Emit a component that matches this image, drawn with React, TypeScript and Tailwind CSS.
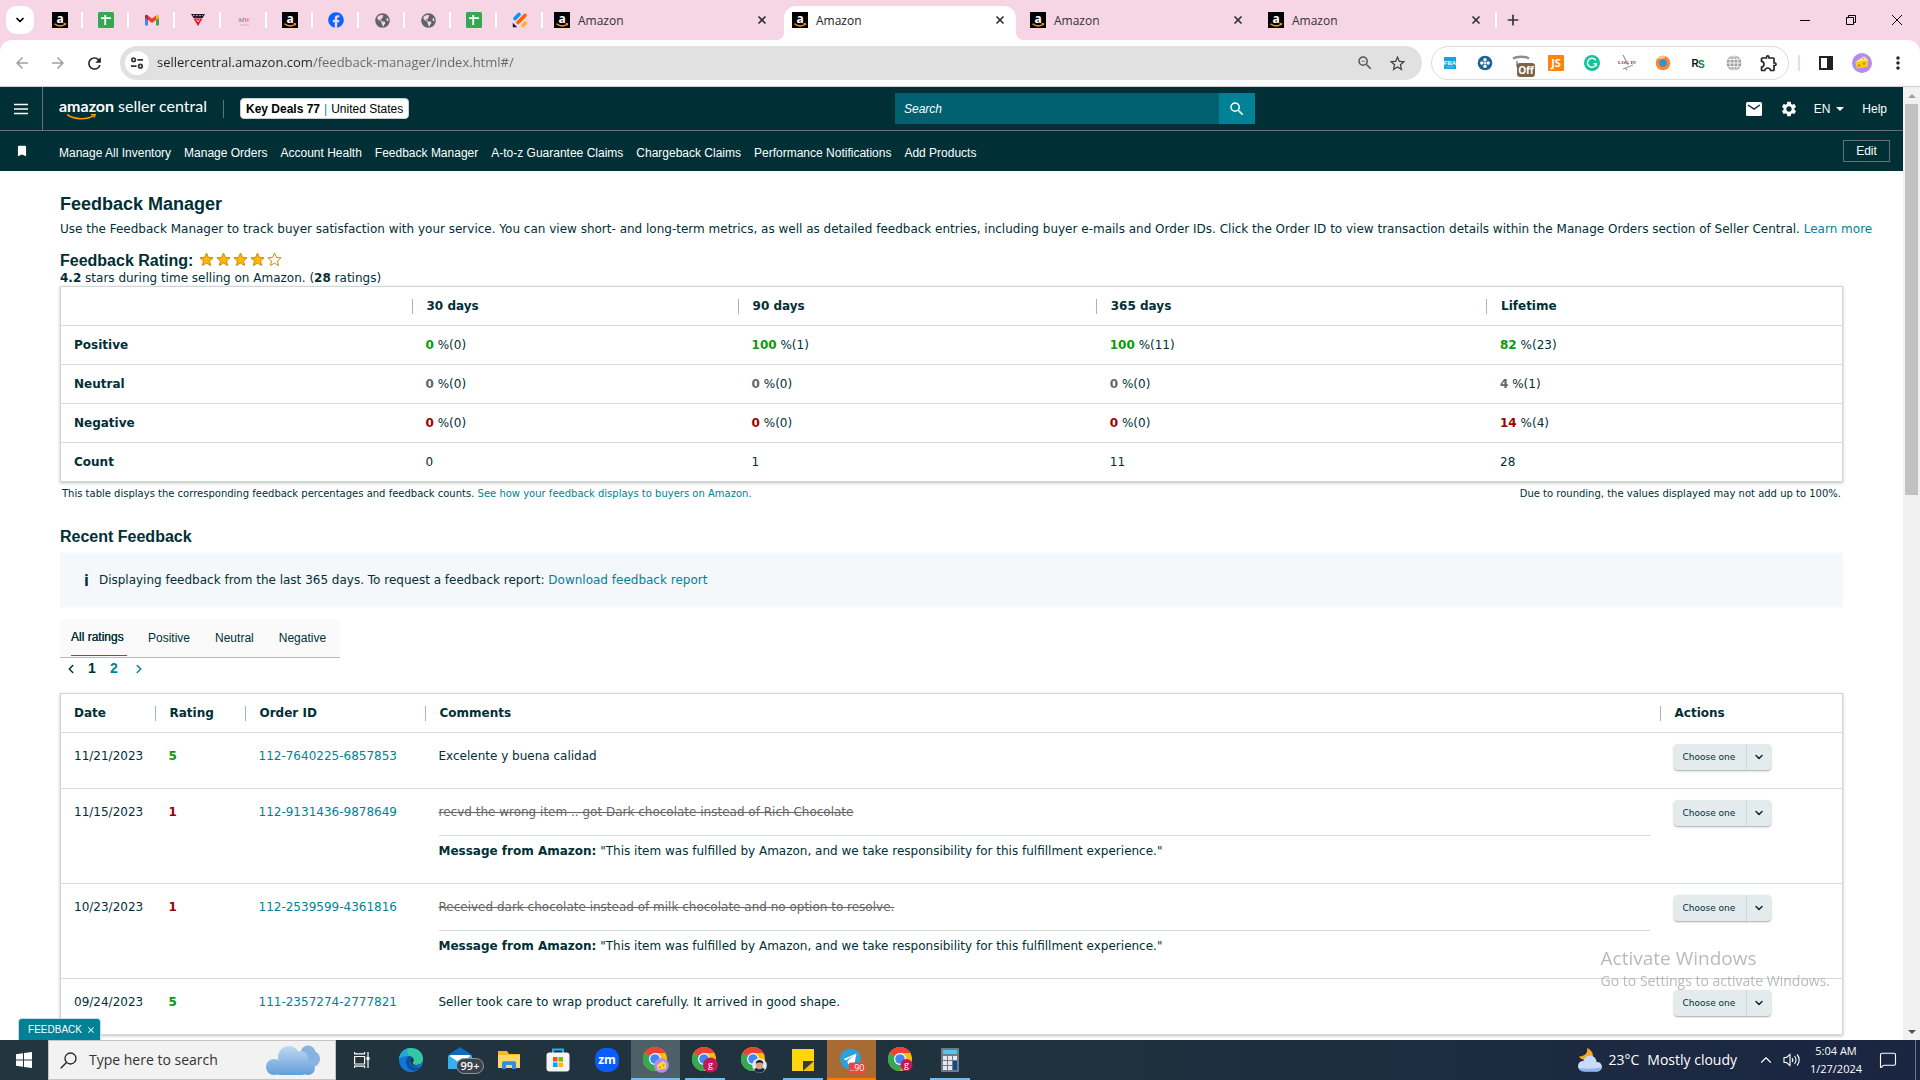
import React from 'react';
import { FaFacebook, FaGlobeAmericas } from 'react-icons/fa';
import {
  MdArrowBack,
  MdArrowForward,
  MdBookmark,
  MdClose,
  MdMoreVert,
  MdOutlineExtension,
  MdRefresh,
  MdSearch,
  MdSettings,
  MdStarBorder,
  MdZoomOut,
} from 'react-icons/md';
import { ChevronDown, ChevronLeft, ChevronRight, ChevronUp, MessageSquare, Plus, X } from 'lucide-react';

/* ---------- favicons ---------- */

function AmazonFavicon() {
  return (
    <svg className="size-4 shrink-0 overflow-visible" viewBox="0 0 16 16" aria-hidden="true">
      <rect width="16" height="16" fill="#000" />
      <text x="8" y="10.6" textAnchor="middle" fontSize="12" fontWeight="bold" fontFamily="Open Sans, sans-serif" fill="#fff">
        a
      </text>
      <path d="M2.500 11.800c3.200 2.600 7.500 2.600 10.600.5" fill="none" stroke="#f90" strokeWidth="1.300" />
      <path d="M11.600 11.600l2.200-.2-.6 2" fill="none" stroke="#f90" strokeWidth="1" />
    </svg>
  );
}

function SheetsFavicon() {
  return (
    <svg className="size-4" viewBox="0 0 16 16" aria-hidden="true">
      <rect width="16" height="16" rx="1.6" fill="#34a853" />
      <path d="M3 6.200h10M7.200 3v10" stroke="#fff" strokeWidth="1.800" />
    </svg>
  );
}

function GmailFavicon() {
  return (
    <svg className="size-4" viewBox="0 0 16 16" aria-hidden="true">
      <path d="M1 4v8.600c0 .5.4.9.9.9H4V7z" fill="#4285f4" />
      <path d="M15 4v8.600c0 .5-.4.9-.9.9H12V7z" fill="#34a853" />
      <path d="M4 3.400V8l4 3 4-3V3.400L8 6.500z" fill="#ea4335" />
      <path d="M1 4.200V5.800L4 8V3.400C2.600 2.200 1 2.900 1 4.200z" fill="#c5221f" />
      <path d="M15 4.200V5.800L12 8V3.400C13.400 2.200 15 2.900 15 4.200z" fill="#fbbc04" />
    </svg>
  );
}

function TriangleFavicon() {
  return (
    <svg className="size-4" viewBox="0 0 16 16" aria-hidden="true">
      <path d="M1 2h14l-2.400 4H3.500z" fill="#2b1a2e" />
      <path d="M3.500 6.500h9L8 14z" fill="#e01b22" />
      <path d="M3 3.500h10" stroke="#f0802a" strokeWidth="1.200" strokeDasharray="2 1" />
      <path d="M6.500 7.500L8 10l1.500-2.500" fill="none" stroke="#fff" strokeWidth=".8" />
    </svg>
  );
}

function ScriptFavicon() {
  return (
    <svg className="size-4 overflow-visible" viewBox="0 0 16 16" aria-hidden="true">
      <text x="8" y="10" textAnchor="middle" fontSize="7" fontStyle="italic" fontFamily="Liberation Serif, serif" fill="#6b6f9c">
        M<tspan fill="#e0606c">W</tspan>
      </text>
      <path d="M4 13h9" stroke="#d9a9b8" strokeWidth=".8" />
    </svg>
  );
}

function StripesFavicon() {
  return (
    <svg className="size-4" viewBox="0 0 16 16" aria-hidden="true" strokeLinecap="round" strokeWidth="3.600">
      <path d="M3 6.500L7 2.500" stroke="#0099ff" />
      <path d="M6 10.500L13 3.500" stroke="#ff6100" />
      <path d="M11 13.500L13.500 11" stroke="#ffb629" />
      <path d="M.8 10.800v4.400h4.400z" fill="#0a1551" stroke="none" />
    </svg>
  );
}

const Globe = () => <FaGlobeAmericas className="size-[15px] text-[#5f6368]" />;

const pinned: [string, React.ReactNode][] = [
  ['Amazon', <AmazonFavicon />],
  ['Sheets', <SheetsFavicon />],
  ['Gmail', <GmailFavicon />],
  ['Triangle', <TriangleFavicon />],
  ['Script', <ScriptFavicon />],
  ['Amazon orders', <AmazonFavicon />],
  ['Facebook', <FaFacebook className="size-4 text-[#0866ff]" />],
  ['Site one', <Globe />],
  ['Site two', <Globe />],
  ['Sheets two', <SheetsFavicon />],
  ['Forms', <StripesFavicon />],
];

function TabStrip() {
  return (
    <div className="flex h-10 items-center bg-[#f6d5e4] font-['Open_Sans',sans-serif] text-xs text-[#333]">
      <button aria-label="Search tabs" className="ml-[6px] mr-[3px] flex size-7 items-center justify-center rounded-[10px] bg-white">
        <ChevronDown className="size-3 text-black" strokeWidth={3.500} />
      </button>
      {pinned.map(([name, icon]) => (
        <button key={name} aria-label={name} className="flex h-4 w-[46px] items-center justify-center border-r-2 border-white pl-0.5">
          {icon}
        </button>
      ))}
      {[0, 1, 2, 3].map((i) => (
        <div
          key={i}
          className={
            i === 1
              ? 'relative mx-[3px] mt-[6px] flex h-[34px] w-[232px] items-center rounded-t-xl bg-white pb-[6px] pl-2 pr-[10px] text-[#222]'
              : 'flex h-7 w-[238px] items-center pl-[11px] pr-[13px]'
          }
        >
          {i === 1 && (
            <>
              <span className="absolute bottom-0 -left-2 size-2 bg-[radial-gradient(circle_at_0_0,#f6d5e4_8px,#fff_8px)]" />
              <span className="absolute bottom-0 -right-2 size-2 bg-[radial-gradient(circle_at_100%_0,#f6d5e4_8px,#fff_8px)]" />
            </>
          )}
          <AmazonFavicon />
          <span className="ml-2 flex-1 pt-0.5">Amazon</span>
          <button aria-label="Close tab">
            <X className="size-3 text-[#333]" strokeWidth={3.500} />
          </button>
        </div>
      ))}
      <span className="h-4 w-0.5 bg-white" />
      <button aria-label="New tab" className="ml-2">
        <Plus className="size-4 text-[#333]" strokeWidth={2.500} />
      </button>
      <div className="ml-auto flex text-black">
        <button aria-label="Minimize" className="flex h-10 w-[46px] items-center justify-center">
          <svg className="size-2.5" viewBox="0 0 10 10">
            <path d="M0 5.500h10" stroke="currentColor" />
          </svg>
        </button>
        <button aria-label="Restore" className="flex h-10 w-[46px] items-center justify-center">
          <svg className="size-2.5" viewBox="0 0 10 10" fill="none" stroke="currentColor">
            <path d="M.5 2.500h7v7h-7zM2.500 2.500v-2h7v7h-2" />
          </svg>
        </button>
        <button aria-label="Close window" className="flex h-10 w-[46px] items-center justify-center">
          <svg className="size-2.5" viewBox="0 0 10 10" stroke="currentColor">
            <path d="M0 0l10 10M10 0L0 10" />
          </svg>
        </button>
      </div>
    </div>
  );
}

/* ---------- toolbar ---------- */

function CheeseAvatar({ className }: { className: string }) {
  return (
    <svg className={className} viewBox="0 0 20 20" aria-hidden="true">
      <circle cx="10" cy="10" r="10" fill="#b18cf5" />
      <path d="M3.500 9l8.500-5.500 4 3.500-.3 6.500L5 15.500z" fill="#fdd835" />
      <path d="M3.500 9L16 7l-.3 6.500L5 15.500z" fill="#f9c916" />
      <path d="M3.500 9L12 3.500 16 7z" fill="#fff07a" />
      <circle cx="7" cy="12.500" r="1.300" fill="#d98a0a" />
      <circle cx="12" cy="10.500" r="1.300" fill="#d98a0a" />
      <circle cx="11.500" cy="5.800" r=".9" fill="#e5a913" />
    </svg>
  );
}

const extensions: [string, React.ReactNode][] = [
  [
    'FBA',
    <svg className="size-4" viewBox="0 0 16 16">
      <rect x="2" y="2" width="12" height="12" fill="#12a5e0" />
      <text x="8" y="9.500" textAnchor="middle" fontSize="6" fontWeight="bold" fontFamily="Liberation Sans, sans-serif" fill="#fff">
        FBA
      </text>
      <path d="M4 11.800h8" stroke="#7fd0f0" strokeWidth=".7" />
    </svg>,
  ],
  [
    'Helper',
    <svg className="size-4" viewBox="0 0 16 16">
      <circle cx="8" cy="8" r="7.300" fill="#1f6391" />
      <g fill="#fff">
        <circle cx="8" cy="4.800" r="1.700" />
        <circle cx="8" cy="11.200" r="1.700" />
        <circle cx="4.800" cy="8" r="1.700" />
        <circle cx="11.200" cy="8" r="1.700" />
        <rect x="6.800" y="6.800" width="2.400" height="2.400" fill="#dbe8f1" />
      </g>
    </svg>,
  ],
  [
    'Blocker',
    <svg className="size-7" viewBox="0 0 28 28">
      <path d="M6 9.500c4-2.500 12-2.500 16 0" stroke="#8d8d8d" strokeWidth="2.500" fill="none" />
      <path d="M10 12v6" stroke="#a5a5a5" strokeWidth="2" fill="none" />
      <rect x="10" y="14" width="18" height="14" rx="3" fill="#7e6346" />
      <text x="19" y="24.500" textAnchor="middle" fontSize="10" fontWeight="bold" fontFamily="Open Sans, sans-serif" fill="#fff">
        Off
      </text>
    </svg>,
  ],
  [
    'JS',
    <svg className="size-4" viewBox="0 0 16 16">
      <rect width="16" height="16" rx="1" fill="#ff8308" />
      <text x="8" y="12" textAnchor="middle" fontSize="11" fontWeight="bold" fontFamily="Open Sans, sans-serif" fill="#fff">
        JS
      </text>
    </svg>,
  ],
  [
    'Grammar',
    <svg className="size-4" viewBox="0 0 16 16">
      <circle cx="8" cy="8" r="8" fill="#15c39a" />
      <path d="M11.800 5.500A4.500 4.500 0 1 0 12.300 8.800H9.500M12.300 8.800v2.500" fill="none" stroke="#fff" strokeWidth="1.400" />
    </svg>,
  ],
  [
    'Log in',
    <svg className="size-4 overflow-visible" viewBox="0 0 16 16">
      <path d="M4 0l5 10M4 14l10-4M8 15l-2-2" stroke="#9a9a9a" strokeWidth="1.200" fill="none" />
      <text x="8" y="8.500" textAnchor="middle" fontSize="5" fontWeight="bold" fontFamily="Liberation Serif, serif" fill="#8c2f2f">
        LOG IN
      </text>
    </svg>,
  ],
  [
    'Flame',
    <svg className="size-4" viewBox="0 0 16 16">
      <circle cx="8" cy="8" r="7.300" fill="#f28a45" />
      <path d="M2 4a7.300 7.300 0 0 1 9-2.600L8 4z" fill="#fbc08a" />
      <circle cx="8" cy="8" r="4.200" fill="#e36a2a" />
      <circle cx="8" cy="8" r="3.200" fill="#1b9be6" />
    </svg>,
  ],
  [
    'RS',
    <svg className="size-4 overflow-visible" viewBox="0 0 16 16" fontFamily="Liberation Sans, sans-serif" fontWeight="bold">
      <text x="1.500" y="11.500" fontSize="10" fill="#111">R<tspan y="13" x="8" fill="#14823c">S</tspan></text>
    </svg>,
  ],
  [
    'Web',
    <svg className="size-4" viewBox="0 0 16 16" fill="none" stroke="#fff" strokeWidth=".9">
      <circle cx="8" cy="8" r="7.500" fill="#a0a0a0" stroke="none" />
      <path d="M8 0v16M0 8h16M1.500 4.300h13M1.500 11.700h13" />
      <ellipse cx="8" cy="8" rx="4" ry="7.500" />
    </svg>,
  ],
  ['Extensions', <MdOutlineExtension className="size-5 text-[#222]" />],
];

function Toolbar() {
  return (
    <div className="bg-[#f6d5e4]">
      <div className="flex h-[47px] items-center rounded-t-xl border-b border-[#cfcfcf] bg-white pl-1 pr-1">
        <button aria-label="Back" className="flex w-9 justify-center"><MdArrowBack className="size-[18px] text-[#a0a0a0]" /></button>
        <button aria-label="Forward" className="flex w-9 justify-center"><MdArrowForward className="size-[18px] text-[#a0a0a0]" /></button>
        <button aria-label="Reload" className="flex w-9 justify-center"><MdRefresh className="size-[19px] text-[#222]" /></button>
        <div className="ml-2 flex h-[34px] flex-1 items-center rounded-full bg-[#e1e1e1] pl-[5px] pr-2">
          <button aria-label="Site information" className="flex size-6 items-center justify-center rounded-full bg-white">
            <svg className="size-3.5" viewBox="0 0 14 14" fill="none" stroke="#333" strokeWidth="1.700">
              <circle cx="3.600" cy="3.800" r="1.800" />
              <circle cx="10.400" cy="10.200" r="1.800" />
              <path d="M7.500 3.800h5.500M1 10.200h5.500" />
            </svg>
          </button>
          <input
            aria-label="Address"
            defaultValue="sellercentral.amazon.com/feedback-manager/index.html#/"
            className="ml-2 min-w-0 flex-1 bg-[linear-gradient(90deg,#222_156px,#666_156px)] bg-clip-text font-['Open_Sans',sans-serif] text-[13px] text-transparent outline-none"
          />
          <button aria-label="Zoom" className="flex w-[33px] justify-center"><MdZoomOut className="size-[18px] text-[#555]" /></button>
          <button aria-label="Bookmark page" className="flex w-[33px] justify-center"><MdStarBorder className="size-[19px] text-[#444]" /></button>
        </div>
        <div className="ml-[9px] flex h-[34px] w-[358px] items-center rounded-full border border-[#dcdcdc] bg-white pr-px">
          {extensions.map(([name, icon]) => (
            <button key={name} aria-label={name} className="flex w-9 items-center justify-center">
              {icon}
            </button>
          ))}
        </div>
        <span className="ml-[9px] h-4 w-0.5 bg-[#f6d5e4]" />
        <button aria-label="Side panel" className="ml-2 flex w-9 justify-center">
          <svg className="size-3.5" viewBox="0 0 14 14">
            <path d="M1 1h12v12H1z" fill="none" stroke="#222" strokeWidth="2" />
            <path d="M8 1h5v12H8z" fill="#222" />
          </svg>
        </button>
        <button aria-label="Profile" className="flex w-9 justify-center"><CheeseAvatar className="size-5" /></button>
        <button aria-label="Menu" className="flex w-9 justify-center"><MdMoreVert className="size-5 text-[#222]" /></button>
      </div>
    </div>
  );
}

/* ---------- seller central header ---------- */

const navLinks = [
  'Manage All Inventory',
  'Manage Orders',
  'Account Health',
  'Feedback Manager',
  'A-to-z Guarantee Claims',
  'Chargeback Claims',
  'Performance Notifications',
  'Add Products',
];

function Header() {
  return (
    <header className="bg-[#002f36] text-xs text-white">
      <div className="grid grid-cols-[895fr_360px_648fr] items-center border-b border-[#5f7376]">
        <div className="flex h-[43px] items-center">
          <button aria-label="Open menu" className="flex w-[43px] items-center justify-center self-stretch border-r border-[#5f7376]">
            <svg className="h-3 w-3.5" viewBox="0 0 14 12">
              <path d="M0 1.500h14M0 6h14M0 10.500h14" stroke="#fff" strokeWidth="1.600" />
            </svg>
          </button>
          <a href="#home" className="ml-4 flex flex-col font-['Lato',sans-serif] leading-[16px]" aria-label="amazon seller central">
            <span className="flex gap-1 text-base leading-4">
              <span className="font-bold">amazon</span>
              <span>seller central</span>
            </span>
            <svg className="ml-2 h-1.5 w-[30px]" viewBox="0 0 30 6" fill="none" stroke="#f90">
              <path d="M0 .5c8 5.500 20 5.500 27 .8" strokeWidth="1.600" />
              <path d="M24 .6l4.500-.2-1.500 3.400" strokeWidth="1.200" />
            </svg>
          </a>
          <span className="ml-4 h-[18px] w-px bg-[#5f7376]" />
          <button className="ml-4 flex h-[21px] items-center gap-1 rounded-sm border border-[#c9d0d1] bg-white px-[5px] text-xs text-black">
            <span className="font-bold">Key Deals 77</span>
            <span className="text-[#0a84c8]">|</span>
            <span>United States</span>
          </button>
        </div>
        <form className="flex h-[31px]">
          <input aria-label="Search" placeholder="Search" className="min-w-0 flex-1 bg-[#00606f] px-[9px] italic text-white outline-none placeholder:text-white" />
          <button type="button" aria-label="Submit search" className="flex w-9 items-center justify-center bg-[#008296]">
            <MdSearch className="size-[18px]" />
          </button>
        </form>
        <div className="flex items-center justify-end pr-4">
          <button aria-label="Messages">
            <svg className="h-3.5 w-4" viewBox="0 0 16 14">
              <rect width="16" height="14" rx="1.500" fill="#fff" />
              <path d="M2 3l6 4 6-4" fill="none" stroke="#002f36" strokeWidth="1.500" />
            </svg>
          </button>
          <button aria-label="Settings" className="ml-[18px]"><MdSettings className="size-[18px]" /></button>
          <button className="ml-4 flex items-center gap-1.5">
            EN
            <svg className="h-1 w-2" viewBox="0 0 8 4"><path d="M0 0h8L4 4z" fill="#fff" /></svg>
          </button>
          <a href="#help" className="ml-[18px]">Help</a>
        </div>
      </div>
      <nav className="flex h-10 items-center pr-[13px]">
        <button aria-label="Bookmarks" className="flex w-[43px] justify-center"><MdBookmark className="size-3.5" /></button>
        <div className="ml-4 flex flex-1 gap-[13px] pt-1">
          {navLinks.map((l) => (
            <a key={l} href="#nav">{l}</a>
          ))}
        </div>
        <button className="h-[22px] w-[47px] border border-[#5f7376]">Edit</button>
      </nav>
    </header>
  );
}

/* ---------- page content ---------- */

function Star({ filled }: { filled: boolean }) {
  return (
    <svg className="size-[15px]" viewBox="0 0 15 15">
      <path
        d="M7.500 1l1.900 4.400 4.700.4-3.600 3.100 1.100 4.600-4.100-2.400-4.100 2.400 1.100-4.600L.9 5.800l4.700-.4z"
        fill={filled ? '#ffb800' : '#fff'}
        stroke="#c98a12"
        strokeWidth="1"
      />
    </svg>
  );
}

const summary = [
  { label: 'Positive', color: 'text-[#0a9b0a]', cells: [['0', '0'], ['100', '1'], ['100', '11'], ['82', '23']] },
  { label: 'Neutral', color: 'text-[#666]', cells: [['0', '0'], ['0', '0'], ['0', '0'], ['4', '1']] },
  { label: 'Negative', color: 'text-[#a00000]', cells: [['0', '0'], ['0', '0'], ['0', '0'], ['14', '4']] },
];

function HeadCell({ children }: { children: React.ReactNode }) {
  return (
    <th scope="col" className="p-0 text-left align-middle font-bold">
      <div className="flex">
        <span className="h-[15px] w-px bg-[#a6b5b8]" />
        <span className="-my-px ml-3.5">{children}</span>
      </div>
    </th>
  );
}

function SummaryTable() {
  return (
    <table className="w-full table-fixed border border-[#d0d6d8] shadow-[0_1px_3px_rgba(0,0,0,0.25)]">
      <colgroup>
        <col className="w-[351px]" />
        <col className="w-[18.3%]" />
        <col className="w-[20.1%]" />
        <col className="w-[21.9%]" />
        <col />
      </colgroup>
      <thead>
        <tr className="h-[39px] border-b border-[#d5dbdb]">
          <td />
          <HeadCell>30 days</HeadCell>
          <HeadCell>90 days</HeadCell>
          <HeadCell>365 days</HeadCell>
          <HeadCell>Lifetime</HeadCell>
        </tr>
      </thead>
      <tbody>
        {summary.map((r) => (
          <tr key={r.label} className="h-[39px] border-b border-[#d5dbdb]">
            <th scope="row" className="pl-[13px] text-left font-bold">{r.label}</th>
            {r.cells.map(([pct, n], i) => (
              <td key={i} className="pl-3.5">
                <b className={r.color}>{pct}</b> %({n})
              </td>
            ))}
          </tr>
        ))}
        <tr className="h-[39px]">
          <th scope="row" className="pl-[13px] text-left font-bold">Count</th>
          {['0', '1', '11', '28'].map((n) => (
            <td key={n} className="pl-3.5">{n}</td>
          ))}
        </tr>
      </tbody>
    </table>
  );
}

const entries = [
  { date: '11/21/2023', rating: 5, id: '112-7640225-6857853', text: 'Excelente y buena calidad', struck: false },
  { date: '11/15/2023', rating: 1, id: '112-9131436-9878649', text: 'recvd the wrong item .. got Dark chocolate instead of Rich Chocolate', struck: true },
  { date: '10/23/2023', rating: 1, id: '112-2539599-4361816', text: 'Received dark chocolate instead of milk chocolate and no option to resolve.', struck: true },
  { date: '09/24/2023', rating: 5, id: '111-2357274-2777821', text: 'Seller took care to wrap product carefully. It arrived in good shape.', struck: false },
];

function ActionSelect({ id }: { id: string }) {
  return (
    <div className="grid h-[26px] w-[97px] grid-cols-[72px_25px] rounded-sm bg-[#e3ebec] shadow-[0_1px_2px_rgba(0,0,0,0.35)]">
      <select
        aria-label={`Action for order ${id}`}
        className="col-span-2 col-start-1 row-start-1 appearance-none bg-transparent pl-[9px] text-[9px] text-[#002f36] outline-none"
      >
        <option>Choose one</option>
      </select>
      <span className="pointer-events-none col-start-2 row-start-1 flex items-center justify-center border-l border-[#cdd8d9]">
        <ChevronDown className="size-3" strokeWidth={3} />
      </span>
    </div>
  );
}

function FeedbackTable() {
  return (
    <table className="w-full table-fixed border border-[#d0d6d8] shadow-[0_1px_3px_rgba(0,0,0,0.25)]">
      <colgroup>
        <col className="w-[94px]" />
        <col className="w-[90px]" />
        <col className="w-[180px]" />
        <col />
        <col className="w-[183px]" />
      </colgroup>
      <thead>
        <tr className="h-[39px] border-b border-[#d5dbdb]">
          <th scope="col" className="pl-[13px] text-left font-bold">Date</th>
          <HeadCell>Rating</HeadCell>
          <HeadCell>Order ID</HeadCell>
          <HeadCell>Comments</HeadCell>
          <HeadCell>Actions</HeadCell>
        </tr>
      </thead>
      <tbody>
        {entries.map((e) => (
          <tr key={e.id} className="border-b border-[#d5dbdb] align-top">
            <td className="pl-[13px] pt-[15px]">{e.date}</td>
            <td className={e.rating === 5 ? 'pl-3.5 pt-[15px] font-bold text-[#0a9b0a]' : 'pl-3.5 pt-[15px] font-bold text-[#a00000]'}>
              {e.rating}
            </td>
            <td className="pl-3.5 pt-[15px]"><a href="#order" className="text-[#008296]">{e.id}</a></td>
            <td className="pl-3.5 pr-2.5 pt-[15px]">
              {e.struck ? (
                <>
                  <p className="border-b border-[#d5dbdb] pb-[15px] text-[#666] line-through">{e.text}</p>
                  <p className="pb-6 pt-[7px]">
                    <b>Message from Amazon:</b> "This item was fulfilled by Amazon, and we take responsibility for this fulfillment experience."
                  </p>
                </>
              ) : (
                <p className="pb-6">{e.text}</p>
              )}
            </td>
            <td className="pl-3.5 pt-[11px]"><ActionSelect id={e.id} /></td>
          </tr>
        ))}
      </tbody>
    </table>
  );
}

function Content() {
  return (
    <main className="pl-[60px] pr-[60px] pt-[21px] font-['DejaVu_Sans',sans-serif] text-xs leading-4 text-[#002f36]">
      <h1 className="font-['Liberation_Sans',sans-serif] text-lg font-bold leading-6">Feedback Manager</h1>
      <p className="mt-[5px] whitespace-nowrap">
        Use the Feedback Manager to track buyer satisfaction with your service. You can view short- and long-term metrics, as well as detailed feedback
        entries, including buyer e-mails and Order IDs. Click the Order ID to view transaction details within the Manage Orders section of Seller Central.{' '}
        <a href="#more" className="text-[#008296]">Learn more</a>
      </p>
      <div className="mt-[15px] flex h-[18px] items-center">
        <h2 className="font-['Liberation_Sans',sans-serif] text-base font-bold leading-[18px]">Feedback Rating:</h2>
        <div role="img" aria-label="4 of 5 stars" className="ml-1.5 flex gap-0.5 pb-1">
          {[1, 2, 3, 4, 5].map((n) => (
            <Star key={n} filled={n < 5} />
          ))}
        </div>
      </div>
      <p>
        <b>4.2</b> stars during time selling on Amazon. (<b>28</b> ratings)
      </p>
      <SummaryTable />
      <div className="mt-1 flex justify-between px-0.5 text-[10px]">
        <p>
          This table displays the corresponding feedback percentages and feedback counts.{' '}
          <a href="#display" className="text-[#008296]">See how your feedback displays to buyers on Amazon.</a>
        </p>
        <p>Due to rounding, the values displayed may not add up to 100%.</p>
      </div>
      <h2 className="mt-[23px] font-['Liberation_Sans',sans-serif] text-base font-bold leading-6">Recent Feedback</h2>
      <div className="mt-1 flex h-[54px] items-center bg-[#f4f8fa] pl-6">
        <span className="mr-2.5 font-['Open_Sans',sans-serif] text-base font-bold">i</span>
        <p>
          Displaying feedback from the last 365 days. To request a feedback report:{' '}
          <a href="#report" className="text-[#008296]">Download feedback report</a>
        </p>
      </div>
      <div role="tablist" className="mt-3 flex h-[39px] w-fit border-b border-[#b5bcbd] bg-[#fafafa] pl-[11px] pr-3.5 font-['Liberation_Sans',sans-serif]">
        <button role="tab" aria-selected="true" className="mb-px mr-[21px] w-14 border-b border-[#008296] text-left text-[#002f36] [text-shadow:0_0_0_#002f36]">All ratings</button>
        <button role="tab" className="mr-[25px]">Positive</button>
        <button role="tab" className="mr-[25px]">Neutral</button>
        <button role="tab">Negative</button>
      </div>
      <nav aria-label="Pages" className="mb-[15px] flex h-5 items-center pl-1 font-['Liberation_Sans',sans-serif] text-sm font-bold">
        <button aria-label="Previous page" className="pt-0.5"><ChevronLeft className="size-3.5" strokeWidth={2.500} /></button>
        <button className="ml-2.5 w-[22px] text-left">1</button>
        <button className="w-[22px] text-left text-[#008296]">2</button>
        <button aria-label="Next page" className="pt-0.5 text-[#008296]"><ChevronRight className="size-3.5" strokeWidth={2.500} /></button>
      </nav>
      <FeedbackTable />
    </main>
  );
}

function Scrollbar() {
  return (
    <div className="flex w-[17px] shrink-0 flex-col items-center bg-[#f1f1f1]" aria-hidden="true">
      <svg className="h-[17px] w-2" viewBox="0 0 8 17"><path d="M0 11h8L4 7z" fill="#a3a3a3" /></svg>
      <div className="h-[41%] w-[13px] bg-[#c1c1c1]" />
      <svg className="mt-auto h-[17px] w-2" viewBox="0 0 8 17"><path d="M0 7h8l-4 4z" fill="#505050" /></svg>
    </div>
  );
}

/* ---------- taskbar ---------- */

function ChromeIcon({ badge }: { badge: React.ReactNode }) {
  return (
    <svg className="size-[26px]" viewBox="0 0 26 26" aria-hidden="true">
      <g transform="translate(12 12)">
        <circle r="12" fill="#fbbc04" />
        <path d="M-10.400-6A12 12 0 0 0 0 12L5.200 3 0 0z" fill="#34a853" />
        <path d="M-10.400-6A12 12 0 0 1 10.400-6H0l-5.200 3z" fill="#ea4335" />
        <circle r="6" fill="#fff" />
        <circle r="4.800" fill="#4285f4" />
      </g>
      {badge}
    </svg>
  );
}

function GBadge({ r }: { r: number }) {
  return (
    <g>
      <circle cx="18.500" cy="18" r={r} fill="#c2185b" />
      <text x="18.500" y="20.500" textAnchor="middle" fontSize="9" fontFamily="Open Sans, sans-serif" fill="#fff">g</text>
    </g>
  );
}

const apps: { name: string; state?: 'active' | 'open' | 'alert'; icon: React.ReactNode }[] = [
  {
    name: 'Task view',
    icon: (
      <svg className="size-4" viewBox="0 0 16 16" fill="none" stroke="#fff" strokeWidth="1.200">
        <path d="M.6 4.500h10v7.500H.6zM.6 0v1.800h10V0M.6 16v-1.800h10V16M14 0v16" />
        <path d="M12.500 5h3v3h-3z" fill="#fff" stroke="none" />
      </svg>
    ),
  },
  {
    name: 'Edge',
    icon: (
      <svg className="size-6" viewBox="0 0 24 24">
        <circle cx="12" cy="12" r="12" fill="#1277d4" />
        <path d="M0 11C1 3 7 0 12 0c7 0 12 5 12 10.500 0 4-3 6.500-6.500 6.500-3 0-4.500-1.500-3.500-3 1-1.300 1-5.500-4-6C5 7.500 1 9.500 0 11z" fill="#36c6a4" />
        <path d="M0 11C1 4.500 5.500.5 10 .2 6 2.500 9 6 10 8 5 7.500 1 9.500 0 11z" fill="#1fa5d8" />
        <path d="M10 8c-4 2.500-4 10 1 13.500 4 2 9 .5 11.500-3-3 1.500-8 1.500-11-2C10 14 10.500 10 13 9z" fill="#0c4fa0" />
        <path d="M13 9c2 1.500 2 4 1 5-1 1.500.5 3 3.500 3 2 0 4-1 5-2.300-1.500 3.500-7 4-10 1.500C10.500 14 11 10.500 13 9z" fill="#21353f" />
      </svg>
    ),
  },
  {
    name: 'Mail',
    icon: (
      <svg className="-mr-3 h-7 w-9" viewBox="0 0 36 28">
        <path d="M0 9L12 1l12 8v14H0z" fill="#0f6cbd" />
        <path d="M2 9h20v6l-10 3L2 15z" fill="#fff" />
        <path d="M0 9l12 8 12-8v14H0z" fill="#35b1f1" />
        <rect x="8.500" y="12.500" width="27" height="15" rx="7.500" fill="#3b444c" stroke="#8b949a" />
        <text x="22" y="24" textAnchor="middle" fontSize="11" fontWeight="600" fontFamily="Open Sans, sans-serif" fill="#fff">99+</text>
      </svg>
    ),
  },
  {
    name: 'Explorer',
    icon: (
      <svg className="h-5 w-[22px]" viewBox="0 0 22 20">
        <path d="M0 1h9l2 3h11v14H0z" fill="#f5b91c" />
        <path d="M0 5h22v13H0z" fill="#ffd767" />
        <path d="M4 19v-6c0-1 .7-1.800 1.700-1.800h10.600c1 0 1.700.8 1.700 1.800v6h-4v-4H8v4z" fill="#2d8fe0" />
      </svg>
    ),
  },
  {
    name: 'Store',
    icon: (
      <svg className="h-6 w-6" viewBox="0 0 24 24">
        <path d="M7 5V1.500h10V5" fill="none" stroke="#2bb0ea" strokeWidth="2" />
        <rect x=".5" y="4.500" width="23" height="19" rx="3" fill="#f4f4f4" />
        <path d="M7 9h4.500v4.500H7z" fill="#f25022" />
        <path d="M12.500 9H17v4.500h-4.500z" fill="#7fba00" />
        <path d="M7 14.500h4.500V19H7z" fill="#00a4ef" />
        <path d="M12.500 14.500H17V19h-4.500z" fill="#ffb900" />
      </svg>
    ),
  },
  {
    name: 'Zoom',
    icon: (
      <svg className="size-6" viewBox="0 0 24 24">
        <rect width="24" height="24" rx="10" fill="#0b5cff" />
        <text x="12" y="15.500" textAnchor="middle" fontSize="12" fontWeight="bold" fontFamily="Open Sans, sans-serif" fill="#fff">zm</text>
      </svg>
    ),
  },
  {
    name: 'Chrome',
    state: 'active',
    icon: (
      <ChromeIcon
        badge={
          <g>
            <circle cx="18.500" cy="18.500" r="7.300" fill="#b18cf5" />
            <path d="M14 18l6-4 3 2.500v5L15 23z" fill="#fdd835" />
            <circle cx="17" cy="20.500" r="1" fill="#d98a0a" />
            <circle cx="20.500" cy="18.500" r="1" fill="#d98a0a" />
          </g>
        }
      />
    ),
  },
  { name: 'Chrome profile g', state: 'open', icon: <ChromeIcon badge={<GBadge r={7.5} />} /> },
  {
    name: 'Chrome profile photo',
    icon: (
      <ChromeIcon
        badge={
          <g>
            <circle cx="18.500" cy="18.500" r="7.300" fill="#dfe8ee" />
            <path d="M13 23c1-2 3-2.500 5.500-2.500S23 21 24 23c-3 3.500-8 3.500-11 0z" fill="#1d2a44" />
            <ellipse cx="18.500" cy="18" rx="3.600" ry="4.200" fill="#d8a183" />
            <path d="M14.800 17c-.5-5.500 7.900-5.500 7.400 0-1-2-6.400-2-7.400 0z" fill="#20191a" />
          </g>
        }
      />
    ),
  },
  {
    name: 'Sticky notes',
    state: 'open',
    icon: (
      <svg className="size-[22px]" viewBox="0 0 22 22">
        <path d="M0 0h22v12L11 22H0z" fill="#ffd60a" />
        <path d="M11 12h11L11 22z" fill="#3a3a3a" />
        <path d="M11 22L22 12v10z" fill="#f1c40f" />
      </svg>
    ),
  },
  {
    name: 'Telegram',
    state: 'alert',
    icon: (
      <svg className="size-[26px]" viewBox="0 0 26 26">
        <circle cx="11.500" cy="12" r="10.500" fill="#2aa1dd" />
        <path d="M4.500 12l13-5.500-2.500 12-4-3-2 2-.5-3.500 6-5.500-7.500 4.800z" fill="#fff" />
        <rect x="10" y="15.500" width="16" height="10.500" rx="2" fill="#f5403c" />
        <text x="18" y="24" textAnchor="middle" fontSize="9" fontFamily="Open Sans, sans-serif" fill="#fff">..90</text>
      </svg>
    ),
  },
  { name: 'Chrome second', icon: <ChromeIcon badge={<GBadge r={6} />} /> },
  {
    name: 'Calculator',
    state: 'open',
    icon: (
      <svg className="h-6 w-[18px]" viewBox="0 0 18 24">
        <rect width="18" height="24" rx="1" fill="#6f7c87" />
        <rect x="2" y="2" width="14" height="4" fill="#4cc9f0" />
        <g fill="#e6eaed">
          <path d="M2 8h4v4H2zM7 8h4v4H7zM12 8h4v4h-4zM2 13h4v4H2zM7 13h4v4H7zM2 18h4v4H2zM7 18h4v4H7z" />
        </g>
        <path d="M12 13h4v9h-4z" fill="#114a8b" />
      </svg>
    ),
  },
];

const appClass = {
  idle: 'flex h-10 w-[49px] items-center justify-center',
  open: 'flex h-10 w-[49px] items-center justify-center bg-[linear-gradient(#76b9ed,#76b9ed)] bg-[length:40px_2px] bg-bottom bg-no-repeat',
  active: 'flex h-10 w-[49px] items-center justify-center border-b-2 border-[#76b9ed] bg-[#4d5f67] pt-0.5',
  alert: 'flex h-10 w-[49px] items-center justify-center border-b-2 border-[#ff7800] bg-[#a86b33] pt-0.5',
};

function CloudArt() {
  return (
    <svg className="h-8 w-14" viewBox="0 0 56 32" aria-hidden="true">
      <defs>
        <linearGradient id="cloud" gradientUnits="userSpaceOnUse" x1="0" y1="0" x2="0" y2="32">
          <stop offset="0" stopColor="#c6def5" />
          <stop offset="1" stopColor="#5f9bd6" />
        </linearGradient>
      </defs>
      <g fill="#85b3e2">
        <circle cx="47" cy="15" r="8" />
        <circle cx="43" cy="9" r="7.500" />
      </g>
      <g fill="url(#cloud)">
        <circle cx="24" cy="13" r="11" />
        <circle cx="36" cy="14" r="7" />
        <circle cx="9" cy="23" r="8" />
        <circle cx="43" cy="24" r="7" />
        <rect x="8" y="17" width="36" height="14" rx="7" />
      </g>
    </svg>
  );
}

function Taskbar() {
  return (
    <footer className="flex h-10 shrink-0 items-center bg-linear-to-r from-[#22353f] via-[#20323d] to-[#1a2542] font-['Open_Sans',sans-serif] text-white">
      <button aria-label="Start" className="flex w-12 justify-center">
        <svg className="size-4" viewBox="0 0 16 16" fill="#fff">
          <path d="M0 2.300L7 1.300V7.600H0zM8 1.100L16 0v7.600H8zM0 8.500h7v6.300l-7-1zM8 8.500h8V16l-8-1.100z" />
        </svg>
      </button>
      <label className="flex h-10 w-72 items-center border border-[#c4c4c4] bg-[#f2f2f2] pl-[11px] pr-[14px]">
        <svg className="size-[17px] shrink-0" viewBox="0 0 17 17" fill="none" stroke="#222" strokeWidth="1.300">
          <circle cx="10.500" cy="6.500" r="5.500" />
          <path d="M6.500 10.500L.7 16.300" />
        </svg>
        <input aria-label="Type here to search" placeholder="Type here to search" className="ml-3 min-w-0 flex-1 bg-transparent text-sm text-[#333] outline-none placeholder:text-[#333]" />
        <CloudArt />
      </label>
      <div className="flex pl-px">
        {apps.map((a) => (
          <button key={a.name} aria-label={a.name} className={appClass[a.state ?? 'idle']}>
            {a.icon}
          </button>
        ))}
      </div>
      <div className="ml-auto flex h-full items-center">
        <svg className="h-6 w-6" viewBox="0 0 24 24" aria-hidden="true">
          <path d="M9 0c1 4-1 8-8 8.500C3 13 13 14 15 7 14 3 12 1 9 0z" fill="#f7a823" />
          <g fill="#c8dcfa">
            <circle cx="12" cy="14" r="6.500" />
            <circle cx="5" cy="18" r="5" />
            <rect x="2" y="14" width="22" height="9.500" rx="4.700" />
          </g>
          <path d="M1 20c4 1 18 1 22.500-1-.5 3-2.500 4.500-4.500 4.500H5c-2 0-3.500-1.500-4-3.500z" fill="#8db4f0" />
        </svg>
        <span className="ml-1.5 text-sm">23°C</span>
        <span className="ml-2 text-sm">Mostly cloudy</span>
        <ChevronUp className="ml-5 size-[18px]" strokeWidth={1.500} />
        <svg className="ml-2 h-4 w-[18px]" viewBox="0 0 18 16" fill="none" stroke="#fff" strokeWidth="1.100">
          <path d="M1 5.500h2.500L7 2.500v11L3.500 10.500H1zM9 6a3 3 0 0 1 0 4M11.500 4.200a5.500 5.500 0 0 1 0 7.600M14 2.500a8 8 0 0 1 0 11" />
        </svg>
        <div className="ml-2 flex w-[54px] flex-col items-center text-[11px] leading-[18px]">
          <span>5:04 AM</span>
          <span>1/27/2024</span>
        </div>
        <MessageSquare className="ml-4 size-[18px]" strokeWidth={1.500} />
        <span className="ml-[18px] mr-1 h-full w-px bg-[#6c7688]" />
      </div>
    </footer>
  );
}

export default function App() {
  return (
    <div className="flex h-screen flex-col overflow-hidden bg-white font-['Liberation_Sans',sans-serif]">
      <TabStrip />
      <Toolbar />
      <div className="relative flex min-h-0 flex-1">
        <div className="min-w-0 flex-1 overflow-hidden">
          <Header />
          <Content />
        </div>
        <Scrollbar />
        <div className="pointer-events-none absolute bottom-[50px] right-[90px] font-['Open_Sans',sans-serif] text-[#a9a9a9] opacity-80">
          <p className="text-[19px] leading-7">Activate Windows</p>
          <p className="text-sm leading-[18px]">Go to Settings to activate Windows.</p>
        </div>
        <button className="absolute bottom-0 left-[18px] flex h-[22px] w-[83px] items-center justify-end gap-1 rounded-t border border-b-0 border-[#c5dfe3] bg-[#008296] pr-1 text-[10px] text-white">
          FEEDBACK <MdClose className="size-2.5" />
        </button>
      </div>
      <Taskbar />
    </div>
  );
}
